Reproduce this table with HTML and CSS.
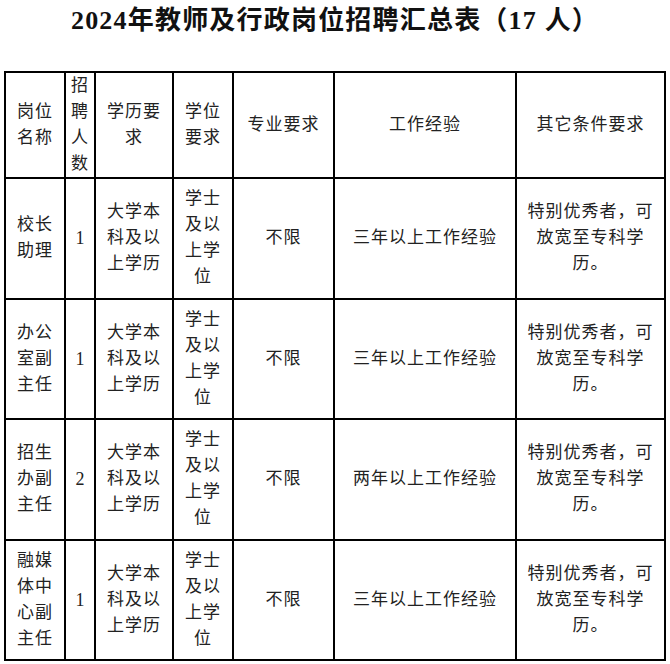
FILE: index.html
```html
<!DOCTYPE html>
<html lang="zh-CN">
<head>
<meta charset="utf-8">
<title>2024年教师及行政岗位招聘汇总表</title>
<link rel="stylesheet" href="styles.css">
</head>
<body>
<h1 class="title">2024年教师及行政岗位招聘汇总表（17 人）</h1>
<table class="sheet">
  <colgroup>
    <col class="c1"><col class="c2"><col class="c3"><col class="c4"><col class="c5"><col class="c6"><col class="c7">
  </colgroup>
  <thead>
    <tr>
      <th>岗位名称</th>
      <th class="narrow">招聘人数</th>
      <th>学历要求</th>
      <th>学位要求</th>
      <th>专业要求</th>
      <th>工作经验</th>
      <th>其它条件要求</th>
    </tr>
  </thead>
  <tbody>
    <tr>
      <td>校长助理</td>
      <td class="narrow num">1</td>
      <td>大学本科及以上学历</td>
      <td>学士及以上学位</td>
      <td>不限</td>
      <td>三年以上工作经验</td>
      <td>特别优秀者，可放宽至专科学历。</td>
    </tr>
    <tr>
      <td>办公室副主任</td>
      <td class="narrow num">1</td>
      <td>大学本科及以上学历</td>
      <td>学士及以上学位</td>
      <td>不限</td>
      <td>三年以上工作经验</td>
      <td>特别优秀者，可放宽至专科学历。</td>
    </tr>
    <tr>
      <td>招生办副主任</td>
      <td class="narrow num">2</td>
      <td>大学本科及以上学历</td>
      <td>学士及以上学位</td>
      <td>不限</td>
      <td>两年以上工作经验</td>
      <td>特别优秀者，可放宽至专科学历。</td>
    </tr>
    <tr>
      <td>融媒体中心副主任</td>
      <td class="narrow num">1</td>
      <td>大学本科及以上学历</td>
      <td>学士及以上学位</td>
      <td>不限</td>
      <td>三年以上工作经验</td>
      <td>特别优秀者，可放宽至专科学历。</td>
    </tr>
  </tbody>
</table>
</body>
</html>
```
FILE: styles.css
```css
html, body {
  margin: 0;
  padding: 0;
  background: #ffffff;
}

body {
  font-family: "Liberation Serif", "Noto Sans CJK SC", serif;
  color: #222222;
}

.title {
  margin: 0;
  height: 42px;
  line-height: 42px;
  font-size: 26px;
  font-weight: bold;
  letter-spacing: 1.2px;
  text-align: center;
  color: #111111;
}

.sheet {
  margin: 29px 0 0 4px;
  width: 662px;
  table-layout: fixed;
  border-collapse: collapse;
  font-size: 17px;
  letter-spacing: 1px;
  line-height: 26px;
}

.c1 { width: 60px; }
.c2 { width: 30px; }
.c3 { width: 78px; }
.c4 { width: 60px; }
.c5 { width: 101px; }
.c6 { width: 182px; }
.c7 { width: 149px; }

.sheet th,
.sheet td {
  border: 2px solid #000000;
  text-align: center;
  vertical-align: middle;
  font-weight: normal;
  padding: 7px 6px 7.5px;
}

.sheet th {
  padding-top: 0;
  padding-bottom: 0;
}

.sheet .narrow {
  padding-left: 2px;
  padding-right: 2px;
}

.num {
  font-size: 18px;
  letter-spacing: 0;
}
```
